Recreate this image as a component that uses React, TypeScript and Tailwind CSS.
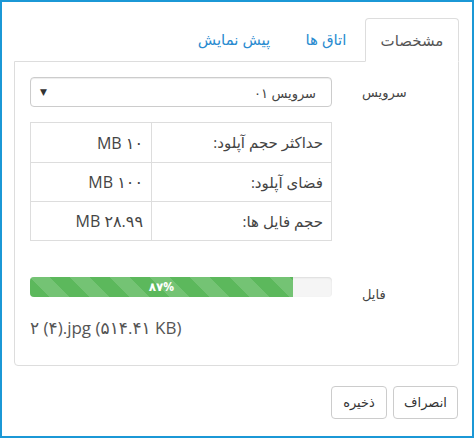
import React from 'react'

const rows = [
  { label: 'حداکثر حجم آپلود:', value: '۱۰ MB' },
  { label: 'فضای آپلود:', value: '۱۰۰ MB' },
  { label: 'حجم فایل ها:', value: '۲۸.۹۹ MB' },
]

export default function App() {
  return (
    <div
      dir="rtl"
      className="w-[474px] h-[438px] border-2 border-[#1b98d6] bg-white pt-[16px] pr-[13px] pl-[12px] text-[#444] font-['Open_Sans','DejaVu_Sans',sans-serif]"
    >
      {/* Tabs */}
      <div className="flex gap-[2px] h-[43px] items-end">
        <div className="w-[94px] h-[44px] -mb-px relative z-10 flex items-center justify-center bg-white border border-[#ddd] border-b-white rounded-t-[4px] text-[15px] text-[#555]">
          مشخصات
        </div>
        <div className="w-[74px] h-[43px] flex items-center justify-center text-[15px] text-[#2a8bd0]">
          اتاق ها
        </div>
        <div className="w-[106px] h-[43px] flex items-center justify-center text-[15px] text-[#2a8bd0]">
          پیش نمایش
        </div>
      </div>

      {/* Panel */}
      <div className="h-[305px] border border-[#ddd] rounded-b-[4px] pt-[15px] pl-[15px]">
        <div className="flex">
          <div className="w-[126px] pl-[30px] pt-[6px] text-left text-[13px]">سرویس</div>
          <div className="w-[302px] h-[30px] border border-[#ccc] rounded-[4px] flex items-center justify-between pr-[15px] pl-[9px] text-[13px] shadow-[inset_0_1px_1px_rgba(0,0,0,0.075)]">
            <span className="pt-[3px]">سرویس ۰۱</span>
            <span className="text-[9px] text-[#333]">▼</span>
          </div>
        </div>

        <div className="flex mt-[15px]">
          <div className="w-[126px]" />
          <div className="w-[302px] border border-[#ddd]">
            {rows.map((r, i) => (
              <div key={r.label} className={`flex h-[39px] ${i > 0 ? 'border-t border-[#ddd]' : ''}`}>
                <div className="w-[180px] border-l border-[#ddd] flex items-center pr-[8px] text-[15px]">
                  {r.label}
                </div>
                <div className="flex-1 flex items-center pr-[8px] text-[16px]">{r.value}</div>
              </div>
            ))}
          </div>
        </div>

        <div className="flex mt-[36px]">
          <div className="w-[126px] pl-[30px] pt-[8px] text-left text-[13px]">فایل</div>
          <div dir="ltr" className="w-[302px] h-[20px] bg-[#f5f5f5] rounded-[4px] overflow-hidden shadow-[inset_0_1px_2px_rgba(0,0,0,0.1)]">
            <div
              className="h-full bg-[#5cb85c] bg-[linear-gradient(45deg,rgba(255,255,255,.15)_25%,transparent_25%,transparent_50%,rgba(255,255,255,.15)_50%,rgba(255,255,255,.15)_75%,transparent_75%,transparent)] bg-[length:40px_40px] flex items-center justify-center text-white text-[12px] font-bold"
              style={{ width: '87%' }}
            >
              ۸۷%
            </div>
          </div>
        </div>

        <div dir="ltr" className="mt-[10px] text-[17px] text-[#555]">
          ۲ (۴).jpg (۵۱۴.۴۱ KB)
        </div>
      </div>

      {/* Footer buttons */}
      <div className="flex gap-[6px] mt-[20px] pr-[1px]">
        <button className="w-[65px] h-[33px] border border-[#ccc] rounded-[4px] bg-white text-[13px] text-[#333]">
          انصراف
        </button>
        <button className="w-[56px] h-[33px] border border-[#ccc] rounded-[4px] bg-white text-[13px] text-[#333]">
          ذخیره
        </button>
      </div>
    </div>
  )
}
